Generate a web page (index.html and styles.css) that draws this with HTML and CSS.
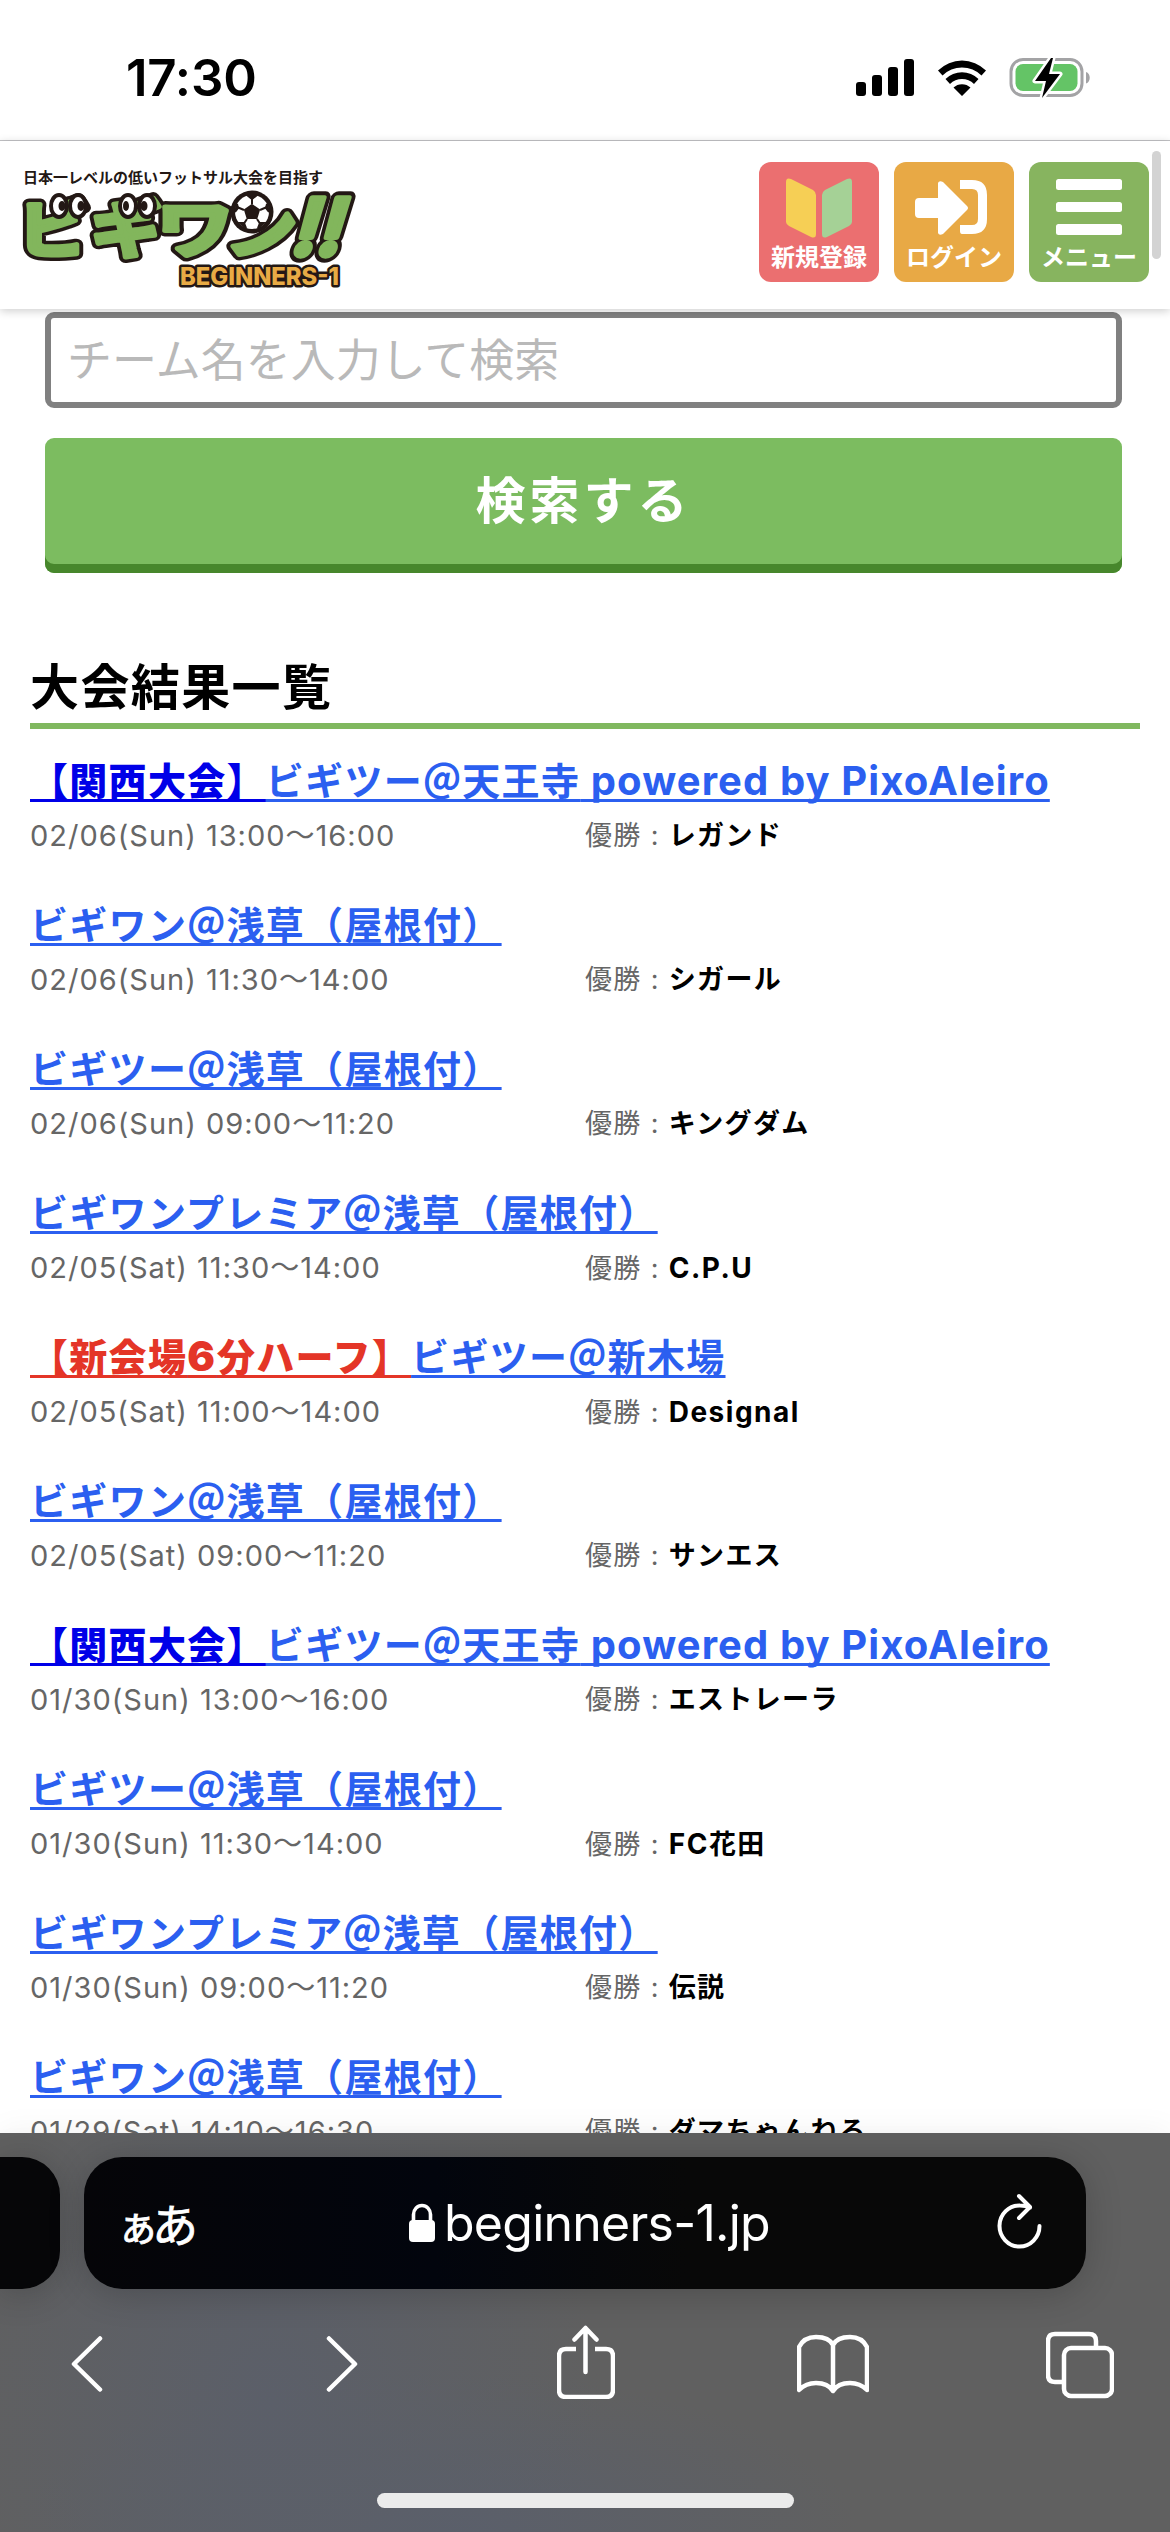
FILE: index.html
```html
<!DOCTYPE html>
<html lang="ja">
<head>
<meta charset="utf-8">
<title>ビギワン!! 大会結果一覧</title>
<link rel="stylesheet" href="styles.css">
</head>
<body>
<div class="screen">
  <div class="status">
    <span class="clock">17:30</span>
    <svg class="status-icons" width="236" height="42" viewBox="0 0 236 42">
      <rect x="0" y="25" width="10" height="14" rx="3"/>
      <rect x="16" y="18" width="10" height="21" rx="3"/>
      <rect x="32" y="10" width="10" height="29" rx="3"/>
      <rect x="48" y="2" width="10" height="37" rx="3"/>
      <path d="M82 13.500a34 34 0 0 1 48 0l-4.500 5a27.500 27.500 0 0 0-39 0zM89.500 22a23.500 23.500 0 0 1 33 0l-4.500 5a17 17 0 0 0-24 0zM97.500 30.500a12.500 12.500 0 0 1 17 0l-8.500 8.500z"/>
      <rect x="155" y="2.500" width="71" height="36" rx="12" fill="none" stroke="#a3a3a5" stroke-width="3"/>
      <path d="M230 15c5 1.500 5 10 0 11.500z" fill="#a3a3a5"/>
      <rect x="159.500" y="7" width="62" height="27" rx="7.500" fill="#64c466"/>
      <path d="M195 1l-16 23h11l-4 17 18-24h-11l4-16z" stroke="#fff" stroke-width="5" stroke-linejoin="round" paint-order="stroke"/>
    </svg>
  </div>
  <header class="header">
    <svg class="logo" width="345" height="134" viewBox="0 0 345 134">
      <defs>
        <g id="wordmark">
          <text class="kana" transform="translate(6 94) scale(.98 .86)">ビ</text>
          <text class="kana" transform="translate(79 94) scale(.98 .86)">ギ</text>
          <text class="kana" transform="translate(145 94) scale(1.06 .86)">ワ</text>
          <text class="kana" transform="translate(213 94) scale(1 .86)">ン</text>
          <text class="bang" transform="translate(277 97) skewX(-16) scale(.95 1)">!!</text>
        </g>
      </defs>
      <text class="tagline" x="11" y="25" textLength="300">日本一レベルの低いフットサル大会を目指す</text>
      <use href="#wordmark" class="outline"/>
      <use href="#wordmark" class="face"/>
      <g class="eyes">
        <ellipse cx="47" cy="48" rx="8" ry="11"/><ellipse cx="66" cy="48" rx="8" ry="11"/>
        <ellipse cx="116" cy="48" rx="8" ry="11"/><ellipse cx="135" cy="48" rx="8" ry="11"/>
      </g>
      <g fill="#231815">
        <ellipse cx="50" cy="48" rx="3.500" ry="5"/><ellipse cx="69" cy="48" rx="3.500" ry="5"/>
        <ellipse cx="114" cy="48" rx="3" ry="5"/><ellipse cx="132" cy="48" rx="3.500" ry="5"/>
      </g>
      <g transform="translate(-1 -4)">
        <circle cx="241" cy="58" r="21.500" fill="#231815"/>
        <circle cx="241" cy="58" r="17" fill="#fff"/>
        <g fill="#231815" stroke="#231815" stroke-width="2">
          <path d="M241 51l7 5-2.500 8h-9l-2.500-8z"/>
          <path d="M241 50v-6M249 56l7-3M246 65l4 6M236 65l-4 6M233 56l-7-3" fill="none"/>
          <path d="M236 41h10l-5 4zM256 50l2 8-3-4zM226 50l-2 8 3-4zM253 69l-6 5 2-5zM229 69l6 5-2-5z"/>
        </g>
      </g>
      <text class="roman" x="168" y="127" textLength="159" lengthAdjust="spacingAndGlyphs">BEGINNERS-1</text>
    </svg>
    <nav class="actions">
      <a class="action signup">
        <svg width="120" height="80" viewBox="0 0 120 80"><path d="M27 20q0-5 5-3l22 11q3 2 3 5v39q0 5-5 3l-22-11q-3-2-3-4z" fill="#f6cf55"/><path d="M93 20q0-5-5-3l-22 11q-3 2-3 5v39q0 5 5 3l22-11q3-2 3-4z" fill="#a5d196"/></svg>
        <span>新規登録</span>
      </a>
      <a class="action login">
        <svg width="120" height="80" viewBox="0 0 120 80"><path d="M25 36h19V21q1-3 5-1l24 24q2 2 0 4L49 72q-4 2-5-1V56H25q-4 0-4-4V40q0-4 4-4z" fill="#fff"/><path d="M66 18h12q15 0 15 15v24q0 15-15 15H68q-2 0-2-3v-6h12q6 0 6-6V33q0-6-6-6H66z" fill="#fff"/></svg>
        <span>ログイン</span>
      </a>
      <a class="action menu">
        <svg width="120" height="80" viewBox="0 0 120 80" fill="#fff"><rect x="27" y="17" width="66" height="11" rx="2.500"/><rect x="27" y="40" width="66" height="10" rx="2.500"/><rect x="27" y="62" width="66" height="11" rx="2.500"/></svg>
        <span>メニュー</span>
      </a>
    </nav>
    <i class="scrollbar"></i>
  </header>

  <main class="content">
    <form class="search">
      <div class="field">チーム名を入力して検索</div>
      <div class="submit">検索する</div>
    </form>
    <h1 class="title">大会結果一覧</h1>
    <ul class="results">
      <li><a class="name"><b class="kansai">【関西大会】</b>ビギツー＠天王寺<span class="latin"> powered by PixoAleiro</span></a><div class="meta"><span class="date">02/06(Sun) 13:00〜16:00</span><span class="winner">優勝 : <b>レガンド</b></span></div></li>
      <li><a class="name">ビギワン＠浅草（屋根付）</a><div class="meta"><span class="date">02/06(Sun) 11:30〜14:00</span><span class="winner">優勝 : <b>シガール</b></span></div></li>
      <li><a class="name">ビギツー＠浅草（屋根付）</a><div class="meta"><span class="date">02/06(Sun) 09:00〜11:20</span><span class="winner">優勝 : <b>キングダム</b></span></div></li>
      <li><a class="name">ビギワンプレミア＠浅草（屋根付）</a><div class="meta"><span class="date">02/05(Sat) 11:30〜14:00</span><span class="winner">優勝 : <b class="en">C.P.U</b></span></div></li>
      <li><a class="name"><b class="new">【新会場<span class="six">6</span>分ハーフ】</b>ビギツー＠新木場</a><div class="meta"><span class="date">02/05(Sat) 11:00〜14:00</span><span class="winner">優勝 : <b class="en">Designal</b></span></div></li>
      <li><a class="name">ビギワン＠浅草（屋根付）</a><div class="meta"><span class="date">02/05(Sat) 09:00〜11:20</span><span class="winner">優勝 : <b>サンエス</b></span></div></li>
      <li><a class="name"><b class="kansai">【関西大会】</b>ビギツー＠天王寺<span class="latin"> powered by PixoAleiro</span></a><div class="meta"><span class="date">01/30(Sun) 13:00〜16:00</span><span class="winner">優勝 : <b>エストレーラ</b></span></div></li>
      <li><a class="name">ビギツー＠浅草（屋根付）</a><div class="meta"><span class="date">01/30(Sun) 11:30〜14:00</span><span class="winner">優勝 : <b><span class="en">FC</span>花田</b></span></div></li>
      <li><a class="name">ビギワンプレミア＠浅草（屋根付）</a><div class="meta"><span class="date">01/30(Sun) 09:00〜11:20</span><span class="winner">優勝 : <b>伝説</b></span></div></li>
      <li><a class="name">ビギワン＠浅草（屋根付）</a><div class="meta"><span class="date">01/29(Sat) 14:10〜16:30</span><span class="winner">優勝 : <b>ダマちゃんねる</b></span></div></li>
    </ul>
  </main>

  <footer class="browser">
    <div class="tabs">
      <div class="tab-prev"></div>
      <div class="address">
        <span class="reader"><small>ぁ</small>あ</span>
        <span class="url">
          <svg width="28" height="40" viewBox="0 0 28 40"><path d="M5.500 18v-6.500a8.500 9 0 0 1 17 0V18" fill="none" stroke="#fff" stroke-width="3.600"/><rect x="1" y="17" width="26" height="22" rx="4" fill="#fff"/></svg>
          <span>beginners-1.jp</span>
        </span>
        <svg class="reload" width="46" height="56" viewBox="0 0 46 56" fill="none" stroke="#fff" stroke-width="4" stroke-linecap="round" stroke-linejoin="round"><path d="M42.500 33A20 20.500 0 1 1 23 12.500q6 0 10 2M22 3l11 11-11 11"/></svg>
      </div>
    </div>
    <div class="toolbar">
      <svg width="32" height="74" viewBox="0 0 32 74"><path d="M29 13.500L3 39l26 25.500"/></svg>
      <svg width="32" height="74" viewBox="0 0 32 74"><path d="M3 13.500L29 39 3 64.500"/></svg>
      <svg width="58" height="74" viewBox="0 0 58 74"><path stroke-linecap="butt" d="M19 24H9q-7 0-7 7v34q0 7 7 7h40q7 0 7-7V31q0-7-7-7H38"/><path d="M28.500 47V4M17.500 14.500l11-11.500 11 11.500"/></svg>
      <svg width="72" height="74" viewBox="0 0 72 74"><path d="M36 20v46q-5-8-17-8-10 0-17 7V22q5-10 17-10 13 0 17 8 4-8 17-8 12 0 17 10v43q-7-7-17-7-12 0-17 8"/></svg>
      <svg width="68" height="74" viewBox="0 0 68 74"><rect x="18" y="23" width="48" height="48" rx="7"/><path d="M50 22v-6q0-7-7-7H9q-7 0-7 7v34q0 7 7 7h8"/></svg>
    </div>
    <div class="home"></div>
  </footer>
</div>
</body>
</html>
```

FILE: styles.css
```css
* { box-sizing: border-box; }
body {
  margin: 0;
  background: #fff;
  color: #000;
  font-family: Inter, "Noto Sans CJK JP", sans-serif;
}
.screen {
  width: 1170px;
  height: 2532px;
  display: flex;
  flex-direction: column;
  overflow: hidden;
}

/* Status bar */
.status {
  height: 141px;
  flex: none;
  display: flex;
  align-items: flex-start;
  justify-content: space-between;
  padding: 57px 78px 0 126px;
  border-bottom: 1px solid #c3c3c6;
}
.clock { font-size: 51px; font-weight: 600; line-height: 42px; letter-spacing: -.2px; }

/* Site header */
.header {
  height: 168px;
  flex: none;
  display: flex;
  justify-content: space-between;
  padding: 13px 9px 0 12px;
  background: #fff;
  box-shadow: 0 2px 9px rgba(0, 0, 0, .2);
  z-index: 1;
}
.logo { display: block; margin-top: 4px; font-family: "Noto Sans CJK JP", sans-serif; font-weight: 700; overflow: visible; }
.tagline { font-size: 15px; fill: #231815; }
.kana { font-size: 72px; font-weight: 700; }
.bang { font-family: Inter, sans-serif; font-size: 78px; font-weight: 700; }
.outline { fill: #231815; stroke: #231815; stroke-width: 14px; stroke-linejoin: round; }
.face { fill: #82b65c; stroke: #82b65c; stroke-width: 6px; stroke-linejoin: round; }
.eyes { fill: #fff; stroke: #231815; stroke-width: 4px; }
.roman {
  font-family: Inter, sans-serif;
  font-size: 25px;
  font-weight: 800;
  fill: #e8ab45;
  stroke: #231815;
  stroke-width: 5px;
  stroke-linejoin: round;
  paint-order: stroke;
}
.actions { display: flex; gap: 15px; margin: 8px 3px 0 auto; }
.action {
  width: 120px;
  height: 120px;
  border-radius: 12px;
  color: #fff;
  text-align: center;
}
.action svg { display: block; }
.action span { display: block; font-size: 24px; line-height: 32px; font-weight: 700; white-space: nowrap; }
.signup { background: #eb6f70; }
.login { background: #e8a945; }
.menu { background: #87b45f; }
.scrollbar { width: 9px; height: 108px; margin-top: -3px; border-radius: 5px; background: #d3d3d3; }

/* Page */
.content { flex: 1; min-height: 0; overflow: hidden; padding: 3px 30px 0; }
.search { padding: 0 18px 0 15px; }
.field {
  height: 96px;
  border: 6px solid #808080;
  border-radius: 9px;
  padding-left: 16px;
  font-size: 45px;
  line-height: 85px;
  color: #b9b9b9;
}
.submit {
  height: 135px;
  margin-top: 30px;
  border-radius: 9px;
  background: #7cbc60;
  box-shadow: inset 0 -9px #47872c;
  color: #fff;
  font-size: 50px;
  font-weight: 700;
  line-height: 126px;
  letter-spacing: 4px;
  text-align: center;
}
.title {
  height: 75px;
  margin: 81px 0 0;
  border-bottom: 6px solid #80b85f;
  font-size: 49px;
  line-height: 67px;
  letter-spacing: 1.400px;
}
.results { list-style: none; margin: 0; padding: 25px 0 0; }
.results li { height: 144px; }
.name {
  display: block;
  width: max-content;
  font-size: 38px;
  line-height: 54px;
  letter-spacing: 1.300px;
  font-weight: 700;
  color: #2b5ff0;
  text-decoration: underline;
  text-decoration-thickness: 3px;
  text-underline-offset: 4px;
  text-decoration-skip-ink: none;
  white-space: pre;
}
.kansai { color: #0000e8; text-decoration: inherit; }
.new { color: #e43527; text-decoration: inherit; }
.six { font-weight: 900; font-size: 41px; line-height: 40px; letter-spacing: 2px; }
.latin { font-size: 40px; line-height: 40px; letter-spacing: 1.100px; }
.meta {
  display: grid;
  grid-template-columns: 555px auto;
  margin-top: 8px;
  line-height: 40px;
  color: #666;
}
.date { font-size: 29px; letter-spacing: 1px; }
.winner { font-size: 27px; letter-spacing: .05em; }
.winner b { color: #000; }
.winner .en { font-size: 28px; letter-spacing: 1.500px; }

/* Browser chrome */
.browser {
  height: 399px;
  flex: none;
  padding-top: 24px;
  z-index: 1;
  background:
    radial-gradient(ellipse 330px 420px at 270px 270px, #5b5f69, rgba(91, 95, 105, 0)),
    radial-gradient(ellipse 420px 160px at 440px 400px, #5a5f6b, rgba(90, 95, 107, 0)),
    #606060;
  box-shadow: 0 -2px 30px rgba(0, 0, 0, .05);
}
.tabs { display: flex; gap: 24px; height: 132px; }
.tab-prev { width: 60px; border-radius: 0 38px 38px 0; background: #060608; box-shadow: 0 4px 36px rgba(0, 0, 0, .2); }
.address {
  width: 1002px;
  display: grid;
  grid-template-columns: 285px 1fr 89px;
  align-items: center;
  padding-left: 39px;
  border-radius: 38px;
  background: linear-gradient(90deg, #050508, #02050d 35%, #080808 60%, #080808);
  box-shadow: 0 4px 36px rgba(0, 0, 0, .2);
  color: #fff;
}
.reader {
  font-family: "Noto Sans CJK JP", sans-serif;
  font-size: 46px;
  font-weight: 400;
  line-height: 60px;
  -webkit-text-stroke: .8px #fff;
}
.reader small { font-size: 42px; margin-right: -7px; margin-left: -6px; }
.url { display: flex; align-items: center; gap: 8px; font-size: 50px; line-height: 60px; letter-spacing: -.75px; }
.reload { margin-bottom: 4px; }
.toolbar {
  display: grid;
  grid-template-columns: 255px 231px 240px 249px auto;
  padding: 36px 0 0 71px;
  fill: none;
  stroke: #fff;
  stroke-width: 4.500px;
  stroke-linecap: round;
  stroke-linejoin: round;
}
.home { width: 417px; height: 15px; margin: 94px auto 0; border-radius: 8px; background: #ebebeb; }
```
